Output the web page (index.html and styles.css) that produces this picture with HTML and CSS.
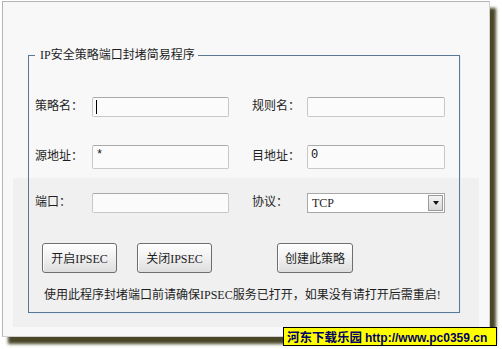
FILE: index.html
```html
<!DOCTYPE html>
<html lang="zh-CN">
<head>
<meta charset="utf-8">
<title>IP安全策略端口封堵简易程序</title>
<link rel="stylesheet" href="styles.css">
</head>
<body>
<div class="window">
  <fieldset class="group">
    <legend class="legend">IP安全策略端口封堵简易程序</legend>
    <div class="row row-1">
      <span class="lbl">策略名：</span>
      <div class="input"><span class="caret"></span></div>
      <span class="lbl lbl-2">规则名：</span>
      <div class="input input-2"></div>
    </div>
    <div class="row row-2">
      <span class="lbl">源地址：</span>
      <div class="input">*</div>
      <span class="lbl lbl-2">目地址：</span>
      <div class="input input-2">0</div>
    </div>
    <div class="row row-3">
      <span class="lbl">端口：</span>
      <div class="input"></div>
      <span class="lbl lbl-2">协议：</span>
      <div class="select">
        <span class="select-text">TCP</span>
        <span class="select-btn"><span class="tri"></span></span>
      </div>
    </div>
    <div class="buttons">
      <button class="btn btn-open">开启IPSEC</button>
      <button class="btn btn-close">关闭IPSEC</button>
      <button class="btn btn-create">创建此策略</button>
    </div>
    <p class="note">使用此程序封堵端口前请确保IPSEC服务已打开，如果没有请打开后需重启!</p>
  </fieldset>
</div>
<div class="watermark"><span class="wm-cn">河东下载乐园</span> <span class="wm-url">http://www.pc0359.cn</span></div>
</body>
</html>
```
FILE: styles.css
```css
html, body {
  margin: 0;
  padding: 0;
  background: #ffffff;
}
body {
  width: 502px;
  height: 349px;
  overflow: hidden;
  position: relative;
  font-family: "Liberation Serif", "Noto Sans CJK SC", serif;
  font-size: 12px;
  color: #1e1e1e;
}
.window {
  box-sizing: border-box;
  margin: 1px 0 0 2px;
  width: 488px;
  height: 336px;
  border: 1px solid #b4b4b4;
  border-right-color: #d0d0d0;
  border-bottom-color: #d0d0d0;
  background: linear-gradient(#f0f0f0, #f0f0f0) 10px 176px / 466px 149px no-repeat, #f8f8f8;
  box-shadow: 6px 7px 3px #4a4728;
  padding: 46px 0 0 25px;
}
.group {
  box-sizing: border-box;
  width: 432px;
  margin: 0;
  padding: 35px 0 9px 6px;
  border: 1px solid #5a7895;
  box-shadow: 1px 1px 0 #e4edf5;
  min-inline-size: 0;
}
.legend {
  margin-left: 0;
  padding: 0 3px 0 5px;
  line-height: 14px;
  font-size: 12px;
  color: #1e1e1e;
}
.row {
  display: flex;
  align-items: center;
}
.row-1 { height: 20px; }
.row-2 { height: 24px; margin-top: 28px; }
.row-3 { height: 20px; margin-top: 24px; }
.lbl {
  width: 57px;
  flex: none;
  line-height: 14px;
  margin-top: -2px;
}
.lbl-2 {
  width: 55px;
  margin-left: 23px;
}
.input {
  box-sizing: border-box;
  width: 137px;
  height: 100%;
  flex: none;
  border: 1px solid #c8c8c8;
  border-top-color: #aaaaaa;
  border-radius: 2px;
  background: #fbfbfb;
  padding: 2px 3px;
  line-height: 14px;
  font-family: "Liberation Mono", "Noto Sans CJK SC", monospace;
  font-size: 12px;
  color: #111;
}
.input-2 { width: 138px; }
.caret {
  display: inline-block;
  width: 1px;
  height: 14px;
  background: #000;
  margin-left: 0;
  vertical-align: top;
}
.select {
  box-sizing: border-box;
  width: 138px;
  height: 100%;
  flex: none;
  display: flex;
  align-items: center;
  justify-content: space-between;
  border: 1px solid #a8a8a8;
  background: #ffffff;
  padding: 0 1px 0 4px;
}
.select-text {
  font-family: "Liberation Serif", serif;
  font-size: 12px;
  line-height: 14px;
}
.select-btn {
  box-sizing: border-box;
  width: 15px;
  height: 16px;
  border: 1px solid #9a9a9a;
  background: linear-gradient(#f4f4f4, #d8d8d8);
  display: flex;
  align-items: center;
  justify-content: center;
}
.tri {
  width: 0;
  height: 0;
  border-left: 3px solid transparent;
  border-right: 3px solid transparent;
  border-top: 4px solid #111;
}
.buttons {
  display: flex;
  margin-top: 30px;
  padding-left: 7px;
}
.btn {
  box-sizing: border-box;
  height: 30px;
  width: 75px;
  padding: 0;
  border: 1px solid #6e6e6e;
  border-radius: 3px;
  background: linear-gradient(#fefefe, #f2f2f2 45%, #dedede);
  box-shadow: inset 1px 1px 0 #ffffff;
  font-family: "Liberation Serif", "Noto Sans CJK SC", serif;
  font-size: 12px;
  color: #1e1e1e;
}
.btn-close { margin-left: 20px; }
.btn-create { margin-left: 65px; width: 76px; }
.note {
  margin: 14px 0 0 9px;
  line-height: 16px;
  white-space: nowrap;
}
.watermark {
  position: absolute;
  left: 283px;
  top: 327px;
  box-sizing: border-box;
  width: 214px;
  height: 19px;
  border: 1px solid #000;
  background: #ffff00;
  color: #000066;
  font-weight: bold;
  line-height: 17px;
  padding-left: 3px;
  white-space: nowrap;
}
.wm-cn {
  font-family: "Noto Sans CJK SC", sans-serif;
  font-size: 12.5px;
}
.wm-url {
  font-family: "Liberation Sans", sans-serif;
  font-size: 12px;
}
```
